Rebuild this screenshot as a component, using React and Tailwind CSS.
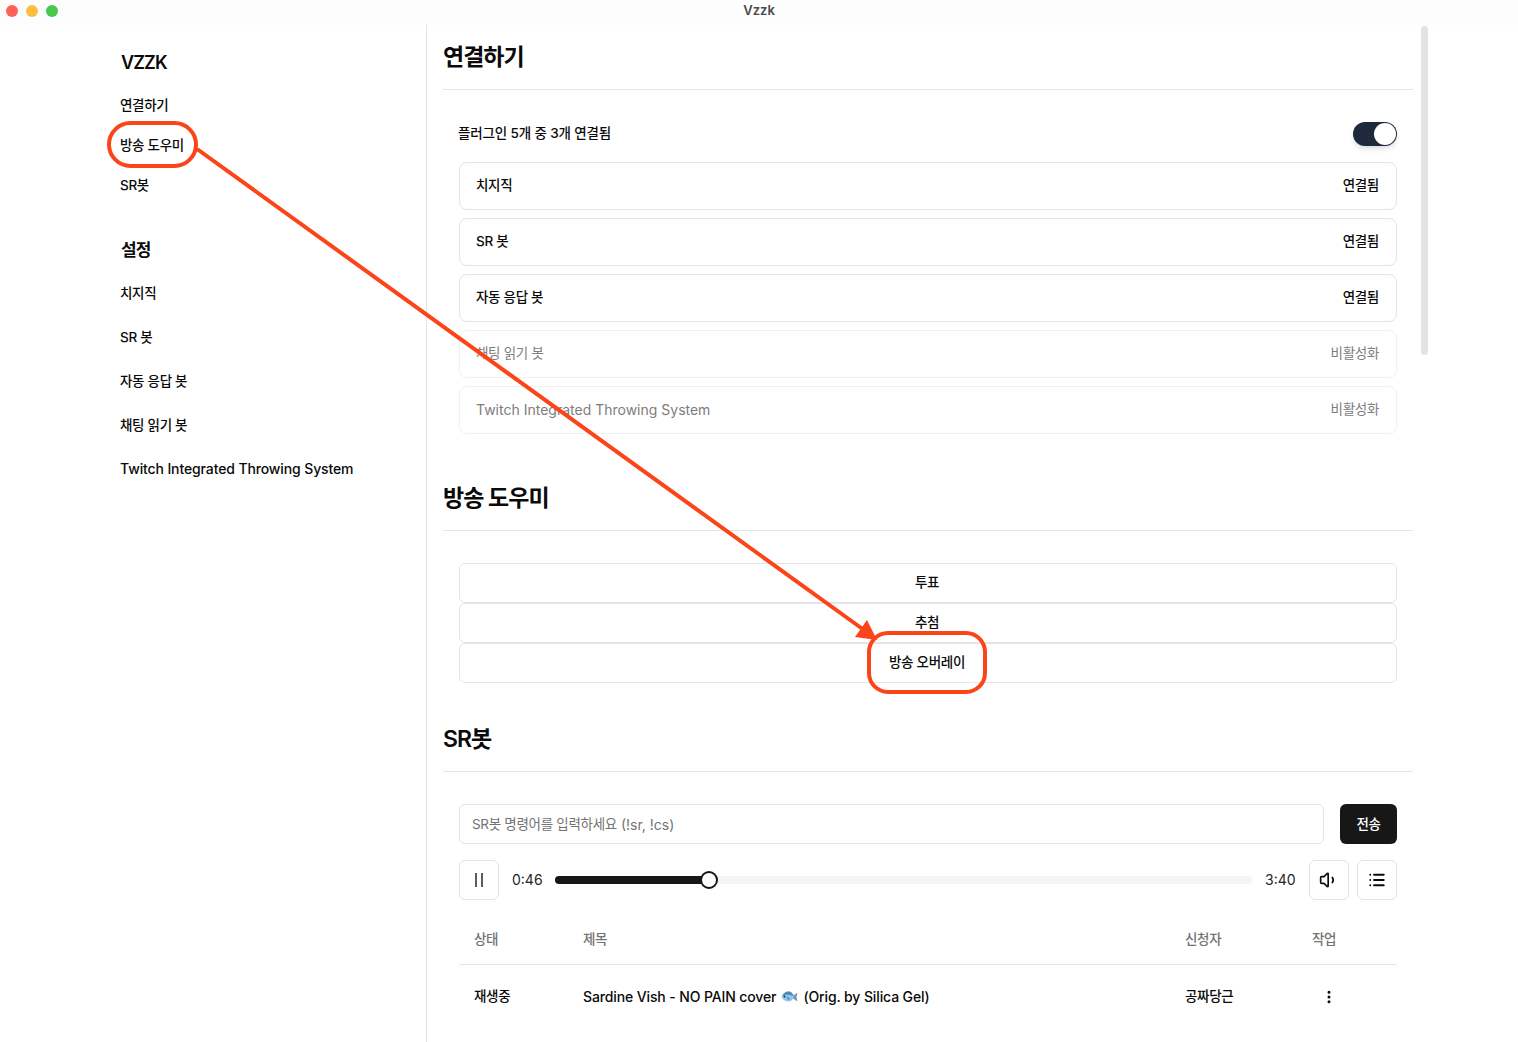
import React from "react";
import { Volume1, List, MoreVertical } from "lucide-react";

const font = { fontFamily: 'Inter, "Noto Sans CJK KR", sans-serif' };

const connected = [
  { name: "치지직", status: "연결됨", on: true },
  { name: "SR 봇", status: "연결됨", on: true },
  { name: "자동 응답 봇", status: "연결됨", on: true },
  { name: "채팅 읽기 봇", status: "비활성화", on: false },
  { name: "Twitch Integrated Throwing System", status: "비활성화", on: false, latin: true },
];

const SectionTitle = ({ children }) => (
  <div className="h-[65px] border-b border-[#e5e5e5] flex items-start">
    <h2 className="text-[23px] font-semibold leading-8 pt-4 tracking-[-1px] text-[#0a0a0a]">{children}</h2>
  </div>
);

const Sidebar = () => (
  <aside className="w-[427px] shrink-0 border-r border-[#e5e5e5] pl-[120px] pt-7 text-[#0a0a0a]">
    <h3 className="text-lg font-semibold leading-5 pl-px tracking-[-0.9px]">VZZK</h3>
    <nav className="mt-[22px] flex flex-col gap-5 text-[13.5px] font-medium leading-5 tracking-[-0.3px]">
      <span>연결하기</span>
      <span>방송 도우미</span>
      <span>SR봇</span>
    </nav>
    <h3 className="text-[17px] font-semibold leading-5 mt-[45px] pl-px tracking-[-0.8px]">설정</h3>
    <nav className="mt-[23px] flex flex-col gap-6 text-[13.5px] font-medium leading-5 tracking-[-0.3px]">
      <span>치지직</span>
      <span>SR 봇</span>
      <span>자동 응답 봇</span>
      <span>채팅 읽기 봇</span>
      <span className="text-sm tracking-[-0.12px]">Twitch Integrated Throwing System</span>
    </nav>
  </aside>
);

const IconButton = ({ children }) => (
  <button className="w-10 h-10 shrink-0 rounded-md border border-[#e5e5e5] flex items-center justify-center text-[#0a0a0a]">
    {children}
  </button>
);

const PauseLines = () => (
  <svg width="16" height="16" viewBox="0 0 16 16" fill="none" stroke="#262626" strokeWidth="1.5">
    <path d="M5 1v14" />
    <path d="M11 1v14" />
  </svg>
);

const Fish = () => (
  <svg width="19" height="16" viewBox="0 0 18 16" className="inline-block mx-1 align-[-3px]">
    <path d="M12.500 7l4.500-3.500-1 4.500 1 4.500-4.500-3z" fill="#7d95a8" />
    <path d="M1 8c1.500-3.500 4-5.500 7-5.500s4.500 2 5.500 5c-1 3-3 5-5.500 5S2.500 11 1 8z" fill="#8cc8ec" />
    <path d="M1.500 7c1.500-3 4-4.500 6.500-4.500s4.500 2 5.500 5C10 5.500 5 5 1.500 7z" fill="#4d89b5" />
    <path d="M6 8c1.500 0 3 .8 3.500 2.500C8 11 6.500 10 6 8z" fill="#4d89b5" />
    <circle cx="4" cy="7.500" r="0.900" fill="#1c2a33" />
  </svg>
);

export default function App() {
  return (
    <div style={font} className="relative w-[1518px] h-[1042px] overflow-hidden bg-white">
      <header className="relative h-[25px] bg-[#fdfdfd] flex items-center justify-center">
        <div className="absolute left-[6px] top-[5px] flex gap-2">
          <span className="w-3 h-3 rounded-full bg-[#ff6159]" />
          <span className="w-3 h-3 rounded-full bg-[#ffbd42]" />
          <span className="w-3 h-3 rounded-full bg-[#48c64e]" />
        </div>
        <span className="text-[13px] font-semibold text-[#4a4a4a] leading-none -mt-[5px]">Vzzk</span>
      </header>

      <div className="flex h-[1017px]">
        <Sidebar />
        <main className="w-[986px] pl-4 text-[#0a0a0a]">
          <SectionTitle>연결하기</SectionTitle>
          <div className="px-4 pt-8">
            <div className="flex items-center justify-between h-6 mb-4 font-medium -ml-px">
              <span className="pb-0.5 text-[13.5px] tracking-[-0.15px]">플러그인 5개 중 3개 연결됨</span>
              <span className="w-11 h-6 rounded-full bg-[#1e293b] flex items-center justify-end pr-px shadow-md">
                <span className="w-[22px] h-[22px] rounded-full bg-white" />
              </span>
            </div>
            <div className="flex flex-col gap-2">
              {connected.map((item) => (
                <div
                  key={item.name}
                  className={`h-12 rounded-lg border flex items-center justify-between pl-4 pr-[17px] ${
                    item.on ? "border-[#e5e5e5] font-medium" : "border-[#f1f1f1] text-[#7d7d7d]"
                  }`}>
                  <span className={item.latin ? "text-sm" : "pb-0.5 text-[13.5px] tracking-[-0.3px]"}>{item.name}</span>
                  <span className="pb-0.5 text-[13.5px] tracking-[-0.3px]">{item.status}</span>
                </div>
              ))}
            </div>
          </div>

          <div className="mt-[32px]">
            <SectionTitle>방송 도우미</SectionTitle>
          </div>
          <div className="px-4 pt-8 flex flex-col">
            {["투표", "추첨", "방송 오버레이"].map((label) => (
              <button
                key={label}
                className="h-10 rounded-md border border-[#e5e5e5] bg-white text-[13.5px] font-medium tracking-[-0.3px] pr-0.5 flex items-center justify-center">
                <span className="pb-0.5">{label}</span>
              </button>
            ))}
          </div>

          <div className="mt-[24px]">
            <SectionTitle>SR봇</SectionTitle>
          </div>
          <div className="px-4 pt-8">
            <div className="flex gap-4">
              <div className="flex-1 h-10 rounded-md border border-[#e5e5e5] px-3 pt-0.5 flex items-center gap-1 text-sm text-[#737373]">
                <span className="text-[13.5px] tracking-[-0.3px]">SR봇 명령어를 입력하세요</span>
                <span>(!sr, !cs)</span>
              </div>
              <button className="w-[57px] h-10 rounded-md bg-[#171717] text-white text-[13.5px] font-medium tracking-[-0.3px]">전송</button>
            </div>
            <div className="flex items-center mt-4">
              <IconButton>
                <PauseLines />
              </IconButton>
              <span className="ml-[13px] w-[30px] text-sm text-[#262626]">0:46</span>
              <div className="relative ml-[13px] flex-1 h-2 rounded-full bg-[#f5f5f5]">
                <div className="h-2 w-[154px] rounded-full bg-[#171717]" />
                <span className="absolute left-[145px] -top-[5px] w-[18px] h-[18px] rounded-full bg-white border-2 border-[#171717]" />
              </div>
              <span className="ml-[13px] w-[30px] text-sm text-[#262626]">3:40</span>
              <div className="ml-[14px] flex gap-2">
                <IconButton>
                  <Volume1 size={20} />
                </IconButton>
                <IconButton>
                  <List size={18} strokeWidth={2.5} />
                </IconButton>
              </div>
            </div>
            <div className="mt-4 h-[49px] pb-0.5 border-b border-[#e5e5e5] flex items-center text-[13.5px] font-medium text-[#737373] tracking-[-0.3px]">
              <span className="pl-[15px] w-[124px]">상태</span>
              <span className="flex-1">제목</span>
              <span className="w-[127px]">신청자</span>
              <span className="w-[85px]">작업</span>
            </div>
            <div className="h-[64px] flex items-center text-sm font-medium">
              <span className="pl-[15px] w-[124px] text-[13.5px] tracking-[-0.3px]">재생중</span>
              <span className="flex-1 tracking-[-0.12px]">
                Sardine Vish - NO PAIN cover
                <Fish />
                (Orig. by Silica Gel)
              </span>
              <span className="w-[127px] text-[13.5px] tracking-[-0.3px]">공짜당근</span>
              <span className="w-[85px] pl-[9px]">
                <MoreVertical size={16} strokeWidth={2.5} />
              </span>
            </div>
          </div>
        </main>
        <div className="absolute left-[1421px] top-[26px] w-[7px] h-[329px] rounded-full bg-[#e3e3e3]" />
      </div>

      {/* annotation overlay */}
      <svg className="absolute inset-0 pointer-events-none" width="1518" height="1042" fill="none">
        <rect x="109" y="123" width="87" height="43" rx="21.500" stroke="#fc4419" strokeWidth="4" />
        <rect x="869" y="633" width="116" height="59" rx="19" stroke="#fc4419" strokeWidth="4" />
        <line x1="197" y1="149" x2="864" y2="630" stroke="#fc4419" strokeWidth="4" />
        <path d="M877 640 L855 637 L867 620 Z" fill="#fc4419" />
      </svg>
    </div>
  );
}
